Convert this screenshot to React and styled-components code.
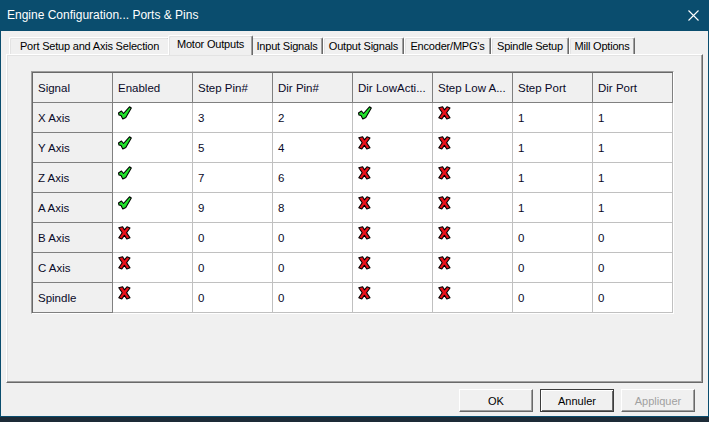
import React from "react";
import styled, { createGlobalStyle } from "styled-components";

const tabs = [
  { label: "Port Setup and Axis Selection", width: 161 },
  { label: "Motor Outputs", width: 85, active: true },
  { label: "Input Signals", width: 72 },
  { label: "Output Signals", width: 81 },
  { label: "Encoder/MPG's", width: 87 },
  { label: "Spindle Setup", width: 78 },
  { label: "Mill Options", width: 66 },
];

const columns = [
  "Signal",
  "Enabled",
  "Step Pin#",
  "Dir Pin#",
  "Dir LowActi...",
  "Step Low A...",
  "Step Port",
  "Dir Port",
];

const rows = [
  ["X Axis", true, 3, 2, true, false, 1, 1],
  ["Y Axis", true, 5, 4, false, false, 1, 1],
  ["Z Axis", true, 7, 6, false, false, 1, 1],
  ["A Axis", true, 9, 8, false, false, 1, 1],
  ["B Axis", false, 0, 0, false, false, 0, 0],
  ["C Axis", false, 0, 0, false, false, 0, 0],
  ["Spindle", false, 0, 0, false, false, 0, 0],
];

const CheckIcon = () => (
  <svg width="14" height="14" viewBox="0 0 14 14">
    <polygon
      points="0.5,7 3.5,5 5.5,7.5 11.5,0.8 13.3,2 7.8,11.5 4.8,13 3,9.5 1,9"
      fill="#22e02c"
      stroke="#000"
      strokeWidth="1.1"
      strokeLinejoin="round"
    />
  </svg>
);

const CrossIcon = () => (
  <svg width="13" height="14" viewBox="0 0 13 14">
    <polygon
      points="0.8,1.8 4.6,0.8 6.4,3.8 9,0.8 12,2 8.6,6.8 12,11.8 8.8,13 6.4,9.4 3.8,13 0.8,11.8 4.2,6.8"
      fill="#e8101a"
      stroke="#000"
      strokeWidth="1.1"
      strokeLinejoin="round"
    />
  </svg>
);

const renderValue = (value) => {
  if (value === true) return <CheckIcon />;
  if (value === false) return <CrossIcon />;
  return value;
};

const App = () => {
  return (
    <>
      <GlobalStyle />
      <Window>
        <TitleBar>
          <Title>Engine Configuration... Ports &amp; Pins</Title>
          <CloseButton>
            <svg width="11" height="11" viewBox="0 0 11 11">
              <path d="M0.5 0.5 L10.5 10.5 M10.5 0.5 L0.5 10.5" stroke="#fff" strokeWidth="1.1" />
            </svg>
          </CloseButton>
        </TitleBar>
        <Body>
          <TabRow>
            {tabs.map((t) => (
              <Tab key={t.label} $width={t.width} $active={t.active}>
                {t.label}
              </Tab>
            ))}
          </TabRow>
          <Panel>
            <Grid>
              {columns.map((c) => (
                <Cell key={c} $head>
                  {c}
                </Cell>
              ))}
              {rows.map((row) =>
                row.map((value, i) => (
                  <Cell
                    key={row[0] + i}
                    $head={i === 0}
                    $icon={typeof value === "boolean"}
                  >
                    {renderValue(value)}
                  </Cell>
                ))
              )}
            </Grid>
          </Panel>
          <ButtonRow>
            <Button>OK</Button>
            <Button $default>Annuler</Button>
            <Button $disabled>Appliquer</Button>
          </ButtonRow>
        </Body>
      </Window>
    </>
  );
};

export default App;

const GlobalStyle = createGlobalStyle`
  html, body {
    margin: 0;
    padding: 0;
    background: #1d2b37;
    overflow: hidden;
  }
  body {
    font-family: "Liberation Sans", Arial, sans-serif;
  }
`;

const Window = styled.div`
  width: 709px;
  height: 417px;
  box-sizing: border-box;
  border: 1px solid #0a4d6e;
  border-top: none;
  background: #f0f0f0;
  display: flex;
  flex-direction: column;
`;

const TitleBar = styled.div`
  height: 31px;
  flex: none;
  margin: 0 -1px;
  padding: 0 10px 0 7px;
  background: #0a4d6e;
  display: flex;
  align-items: center;
  justify-content: space-between;
`;

const Title = styled.div`
  color: #fff;
  font-size: 12px;
  padding-bottom: 1px;
`;

const CloseButton = styled.div`
  display: flex;
  align-items: center;
  justify-content: center;
  width: 12px;
  height: 12px;
`;

const Body = styled.div`
  flex: 1;
  display: flex;
  flex-direction: column;
  padding: 4px 5px 0 5px;
`;

const TabRow = styled.div`
  display: flex;
  align-items: flex-end;
  height: 19px;
  padding-left: 3px;
  position: relative;
  z-index: 1;
`;

const Tab = styled.div`
  box-sizing: border-box;
  width: ${(p) => p.$width}px;
  height: ${(p) => (p.$active ? 20 : 17)}px;
  margin: ${(p) => (p.$active ? "0 -2px -1px -2px" : "0")};
  border-top: 1px solid #fff;
  border-left: 1px solid #fff;
  border-right: 1px solid #696969;
  box-shadow: inset -1px 0 0 #a0a0a0, inset 1px 1px 0 #e3e3e3;
  border-radius: 2px 2px 0 0;
  background: #f0f0f0;
  font-size: 11px;
  letter-spacing: -0.2px;
  color: #000;
  display: flex;
  align-items: ${(p) => (p.$active ? "flex-start" : "center")};
  padding-top: ${(p) => (p.$active ? "2px" : "0")};
  justify-content: center;
  white-space: nowrap;
  position: relative;
  z-index: ${(p) => (p.$active ? 2 : 0)};
`;

const Panel = styled.div`
  box-sizing: border-box;
  height: 329px;
  flex: none;
  border: 1px solid;
  border-color: #fff #696969 #696969 #fff;
  box-shadow: inset -1px -1px 0 #a0a0a0, inset 1px 1px 0 #e3e3e3;
  padding: 16px 0 0 24px;
`;

const Grid = styled.div`
  display: grid;
  grid-template-columns: repeat(8, 80px);
  grid-auto-rows: 30px;
  width: fit-content;
  border: 1px solid;
  border-color: #a0a0a0 #fff #fff #a0a0a0;
  padding: 1px 0 0 1px;
  box-shadow: inset 1px 1px 0 #696969;
  background: #fff;
`;

const Cell = styled.div`
  box-sizing: border-box;
  border-right: 1px solid ${(p) => (p.$head ? "#808080" : "#c0c0c0")};
  border-bottom: 1px solid ${(p) => (p.$head ? "#808080" : "#c0c0c0")};
  background: ${(p) => (p.$head ? "#f0f0f0" : "#fff")};
  padding: ${(p) => (p.$icon ? "3px 0 0 5px" : "0 0 0 5px")};
  display: flex;
  align-items: ${(p) => (p.$icon ? "flex-start" : "center")};
  font-size: 11.5px;
  color: #0a0a28;
  white-space: nowrap;
  overflow: hidden;
`;

const ButtonRow = styled.div`
  display: flex;
  justify-content: flex-end;
  gap: 7px;
  padding: 6px 8px 0 0;
`;

const Button = styled.div`
  box-sizing: border-box;
  width: 74px;
  height: 23px;
  display: flex;
  align-items: center;
  justify-content: center;
  font-size: 11px;
  background: #f0f0f0;
  color: ${(p) => (p.$disabled ? "#a0a0a0" : "#000")};
  border: 1px solid;
  border-color: ${(p) =>
    p.$default ? "#3c3c3c" : "#fff #696969 #696969 #fff"};
  box-shadow: ${(p) =>
    p.$default
      ? "inset 1px 1px 0 #fff, inset -1px -1px 0 #696969"
      : "inset -1px -1px 0 #a0a0a0"};
`;
